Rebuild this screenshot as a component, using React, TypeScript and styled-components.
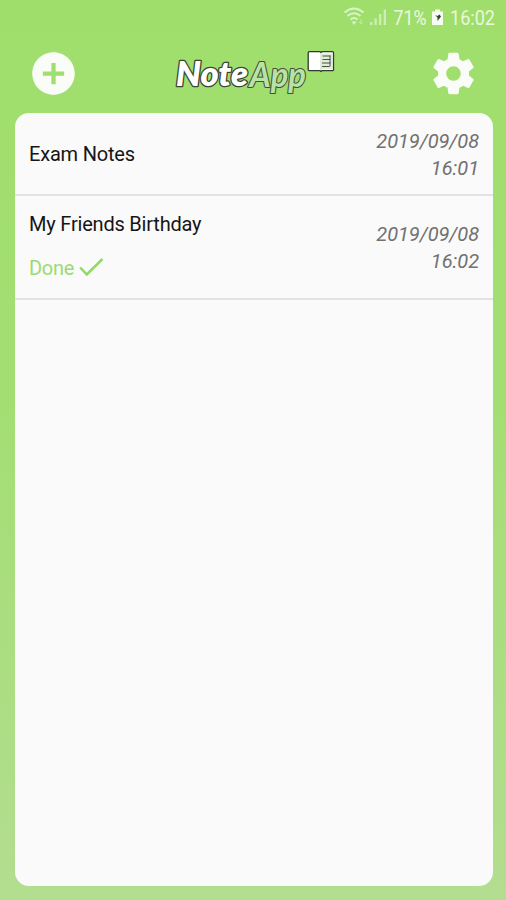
import React from "react";
import styled, { createGlobalStyle } from "styled-components";

const GlobalStyle = createGlobalStyle`
  * { box-sizing: border-box; }
  body { margin: 0; font-family: Roboto, "Liberation Sans", sans-serif; }
  svg { display: block; }
`;

const Screen = styled.div`
  display: flex;
  flex-direction: column;
  width: 506px;
  height: 900px;
  padding: 0 13px 14px 14.5px;
  background: linear-gradient(180deg, #a0de6c 0%, #a3de73 45%, #b3dd90 100%);
`;

const StatusBar = styled.div`
  display: flex;
  justify-content: flex-end;
  height: 36px;
  margin-right: -13px;
`;

const Header = styled.header`
  display: flex;
  justify-content: space-between;
  height: 77px;
  padding: 12px 14.5px 0 13.5px;
`;

const IconButton = styled.button`
  width: 51px;
  height: 51px;
  padding: 0;
  border: 0;
  background: none;
`;

const Panel = styled.main`
  flex: 1;
  border-radius: 14px;
  background: #fafafa;
`;

const NoteRow = styled.article<{ $height: number }>`
  display: flex;
  align-items: center;
  justify-content: space-between;
  height: ${(p) => p.$height}px;
  padding: 0 14px 0 14.5px;
  border-bottom: 2px solid #e2e2e2;
`;

const NoteBody = styled.div<{ $done: boolean }>`
  display: flex;
  flex-direction: column;
  gap: 16px;
  padding-bottom: ${(p) => (p.$done ? 2 : 0)}px;
`;

const Title = styled.div`
  font-size: 20px;
  line-height: 28px;
  letter-spacing: -0.2px;
  color: #151515;
`;

const Done = styled.div`
  display: flex;
  gap: 5px;
  height: 28px;
  font-size: 20px;
  line-height: 28px;
  letter-spacing: -0.3px;
  color: #9bdb72;
`;

const Stamp = styled.time`
  padding-top: 2px;
  font-size: 20px;
  font-style: italic;
  line-height: 27px;
  letter-spacing: -0.05px;
  text-align: right;
  color: #717171;
`;

const StatusIcons = () => (
  <svg width="170" height="36" viewBox="336 0 170 36">
    <g fill="none" stroke="#daf3c8" strokeWidth="2">
      <path d="M344.5 12.5Q354 4.5 363.5 12.5" />
      <path d="M347.5 16Q354 10.5 360.5 16" />
      <path d="M350.5 19.5Q354 16.5 357.5 19.5" />
    </g>
    <path d="M351.5 21.500h5l-2.500 3.500z" fill="#daf3c8" />
    <path d="M361 19v5m-2-2l2 2 2-2" stroke="#c0e8a2" fill="none" />
    <g fill="#cdeeb6">
      <rect x="370" y="22" width="2.300" height="3" />
      <rect x="374.500" y="18.500" width="2.300" height="6.500" />
      <rect x="379" y="14" width="2.300" height="11" />
      <rect x="383.700" y="9.500" width="2.300" height="15.500" />
    </g>
    <g fill="#e9f8dc" fontFamily="Roboto, sans-serif" fontSize="19.500">
      <text x="393.500" y="25" textLength="33" lengthAdjust="spacingAndGlyphs">71%</text>
      <text x="450" y="25" textLength="45" lengthAdjust="spacingAndGlyphs">16:02</text>
    </g>
    <path d="M435 9.500h5v2h3v13.500h-11V11.500h3z" fill="#f8fdf4" />
    <path d="M435 15l2.500 1 2-1.500 1.500 2-3.500 4.500v-3.500z" fill="#304128" />
  </svg>
);

const Logo = () => (
  <svg width="164" height="58" viewBox="171.500 48 164 58">
    <g
      fontFamily="Lato, sans-serif"
      fontStyle="italic"
      fontSize="34"
      strokeLinejoin="round"
      paintOrder="stroke"
    >
      <text x="176.500" y="86" fontWeight="800" fill="#fff" stroke="#3a4434" strokeWidth="2.600" textLength="72" lengthAdjust="spacingAndGlyphs">Note</text>
      <text x="250" y="86.500" fontWeight="700" fill="#bae2a6" stroke="#42503b" strokeWidth="2.200" textLength="56.500" lengthAdjust="spacingAndGlyphs">App</text>
    </g>
    <path d="M310 51.700h10.500l1 .8 1-.8h10.500q1 0 1 1v17q0 1-1 1h-10.500l-1 .8-1-.8H310q-1.300 0-1.300-1v-17q0-1 1.300-1z" fill="#fff" stroke="#303b2b" strokeWidth="1.300" />
    <path d="M322 53.500h10.500v15.500H322z" fill="#e1edda" />
    <path d="M321.500 53v17" stroke="#cbd6c4" />
    <path d="M323 56h8M323 59.500h8M322.500 63h8.500M322.500 66.500h7.500" stroke="#465240" strokeWidth="1.200" />
    <path d="M330.500 55.500v11" stroke="#465240" />
  </svg>
);

const AddIcon = () => (
  <svg width="51" height="51" viewBox="0 0 24 24">
    <path fill="#fafcf8" d="M12 2C6.480 2 2 6.480 2 12s4.480 10 10 10 10-4.480 10-10S17.520 2 12 2zm5 11h-4v4h-2v-4H7v-2h4V7h2v4h4v2z" />
  </svg>
);

const SettingsIcon = () => (
  <svg width="51" height="51" viewBox="-0.300 -0.300 24.600 24.600">
    <path fill="#fafcf8" d="M19.430 12.980c.04-.32.07-.64.07-.98s-.03-.66-.07-.98l2.110-1.650c.19-.15.24-.42.12-.64l-2-3.460c-.12-.22-.39-.3-.61-.22l-2.490 1c-.52-.4-1.080-.73-1.690-.98l-.38-2.650C14.460 2.180 14.250 2 14 2h-4c-.25 0-.46.18-.49.42l-.38 2.650c-.61.25-1.170.59-1.690.98l-2.490-1c-.23-.09-.49 0-.61.22l-2 3.460c-.13.22-.07.49.12.64l2.110 1.650c-.04.32-.07.65-.07.98s.03.66.07.98l-2.110 1.650c-.19.15-.24.42-.12.64l2 3.460c.12.22.39.3.61.22l2.490-1c.52.4 1.080.73 1.690.98l.38 2.650c.03.24.24.42.49.42h4c.25 0 .46-.18.49-.42l.38-2.650c.61-.25 1.170-.59 1.690-.98l2.490 1c.23.09.49 0 .61-.22l2-3.460c.12-.22.07-.49-.12-.64l-2.110-1.650zM12 15.500c-1.930 0-3.500-1.570-3.500-3.500s1.570-3.500 3.500-3.500 3.500 1.570 3.500 3.500-1.570 3.500-3.500 3.500z" />
  </svg>
);

const CheckIcon = () => (
  <svg width="25" height="28" viewBox="0 0 25 28">
    <path d="M1.200 13.500L7.800 20.500 23.500 5" fill="none" stroke="#8fda62" strokeWidth="2.500" />
  </svg>
);

const notes = [
  { title: "Exam Notes", date: "2019/09/08", time: "16:01", done: false, height: 83 },
  { title: "My Friends Birthday", date: "2019/09/08", time: "16:02", done: true, height: 104 },
];

export default function App() {
  return (
    <>
      <GlobalStyle />
      <Screen>
        <StatusBar>
          <StatusIcons />
        </StatusBar>
        <Header>
          <IconButton aria-label="Add note"><AddIcon /></IconButton>
          <Logo />
          <IconButton aria-label="Settings"><SettingsIcon /></IconButton>
        </Header>
        <Panel>
          {notes.map((note) => (
            <NoteRow key={note.title} $height={note.height}>
              <NoteBody $done={note.done}>
                <Title>{note.title}</Title>
                {note.done && <Done>Done<CheckIcon /></Done>}
              </NoteBody>
              <Stamp>{note.date}<br />{note.time}</Stamp>
            </NoteRow>
          ))}
        </Panel>
      </Screen>
    </>
  );
}
